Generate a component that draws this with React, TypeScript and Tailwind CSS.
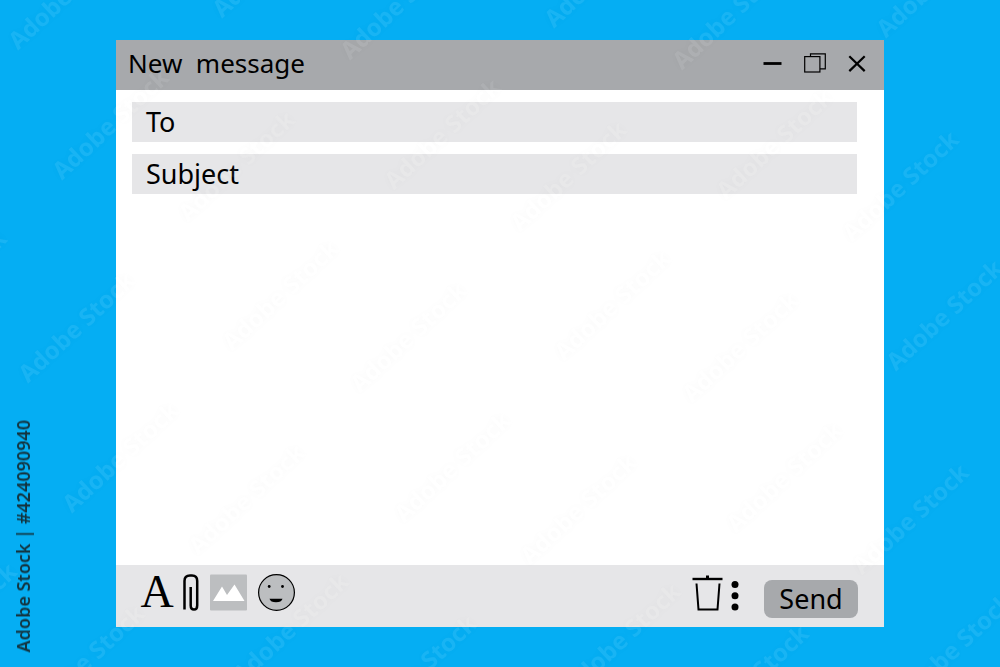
import React from 'react';

// One repeat of the watermark; each point is where a line of text starts
const TILE = [
  [20, 53],
  [64, 183],
  [190, 225],
  [224, 21],
];

const marks = Array.from({ length: 5 * 4 }, (_, n) => {
  const col = (n % 5) - 1;
  const row = Math.floor(n / 5) - 1;
  return TILE.map(([x, y]) => ({
    left: x + col * 332 + row * 10,
    top: y + col * 10 + row * 333,
  }));
}).flat();

const Watermark: React.FC = () => (
  <div
    aria-hidden="true"
    className="pointer-events-none absolute inset-0 overflow-hidden opacity-8 select-none"
  >
    {marks.map((mark) => (
      <span
        key={`${mark.left}-${mark.top}`}
        style={mark}
        className="absolute origin-bottom-left -translate-y-full -rotate-43 text-[24px] leading-none font-bold whitespace-nowrap text-white [text-shadow:0_0_9px_rgba(0,0,0,0.35)]"
      >
        Adobe Stock
      </span>
    ))}
  </div>
);

const TitleBar: React.FC = () => (
  <header className="flex h-[50px] items-center justify-between bg-[#a7a9ac] pr-[17px] pb-1 pl-3">
    <h1 className="text-[26px] leading-8 whitespace-pre">New  message</h1>
    <div className="flex items-center gap-[21px]">
      <button type="button" aria-label="Minimize">
        <svg width="20" height="20" viewBox="0 0 20 20">
          <path d="M.5 10.500h18" stroke="black" strokeWidth="2.800" />
        </svg>
      </button>
      <button type="button" aria-label="Restore">
        <svg width="22" height="20" viewBox="0 0 22 20" fill="none" stroke="black" strokeWidth="1.200">
          <path d="M6.500 3.500V.8h14.800v15h-5.300" />
          <rect x=".7" y="3.600" width="15.200" height="15.400" />
        </svg>
      </button>
      <button type="button" aria-label="Close">
        <svg width="20" height="20" viewBox="0 0 20 20">
          <path d="M2.300 3.300l15.400 14.800M17.700 3.300L2.300 18.100" stroke="black" strokeWidth="2.200" />
        </svg>
      </button>
    </div>
  </header>
);

const Field: React.FC<{ id: string; label: string }> = ({ id, label }) => (
  <div className="flex h-10 items-center gap-3 bg-[#e6e6e8] px-[14px]">
    <label htmlFor={id} className="text-[27px] leading-8">
      {label}
    </label>
    <input
      id={id}
      type="text"
      className="min-w-0 flex-1 bg-transparent text-xl outline-none"
    />
  </div>
);

const Toolbar: React.FC = () => (
  <footer className="flex h-[62px] items-start justify-between bg-[#e6e6e8] px-[26px] pt-[9px]">
    <div className="flex items-start gap-[11px]">
      <button
        type="button"
        aria-label="Formatting"
        className="h-9 w-[30px] font-['Liberation_Serif',serif] text-[46px] leading-9"
      >
        <span className="-mx-1">A</span>
      </button>
      <button type="button" aria-label="Attach file">
        <svg width="16" height="37" viewBox="0 0 16 37" fill="none" stroke="black">
          <path
            d="M1.500 35.500V7Q1.500 1.600 7 1.600H9Q14.200 1.600 14.200 7V31.500Q14.200 35.500 11 35.500Q7.700 35.500 7.700 31.500V13"
            strokeWidth="2.500"
          />
        </svg>
      </button>
      <button type="button" aria-label="Insert image">
        <svg width="37" height="37" viewBox="0 0 37 37">
          <rect y=".6" width="37" height="36" rx="1" fill="#bcbec0" />
          <path d="M3 27L12 12.500L17 21L24.500 10.500L34.500 27Z" fill="white" />
        </svg>
      </button>
      <button type="button" aria-label="Insert emoji">
        <svg width="37" height="37" viewBox="0 0 37 37">
          <circle cx="18.500" cy="18.500" r="17.900" fill="#bcbec0" stroke="black" strokeWidth="1.200" />
          <circle cx="11.200" cy="12.500" r="1.400" />
          <circle cx="24.500" cy="12.500" r="1.400" />
          <path d="M11.500 24.800H24.500Q23.500 28.300 18 28.300Q12.500 28.300 11.500 24.800Z" />
        </svg>
      </button>
    </div>
    <div className="flex items-start">
      <button type="button" aria-label="Discard" className="mr-2">
        <svg width="31" height="37" viewBox="0 0 31 37" fill="none" stroke="black" strokeWidth="2">
          <path d="M.5 5H30.500" strokeWidth="2.400" />
          <path d="M15.500 1.500V5" strokeWidth="3" />
          <path d="M4.500 9.500L6.500 35.500H25.500L27.500 9.500" />
        </svg>
      </button>
      <button type="button" aria-label="More options" className="mr-[25px]">
        <svg width="8" height="37" viewBox="0 0 8 37">
          <circle cx="4" cy="10.500" r="3.500" />
          <circle cx="4" cy="21.700" r="3.500" />
          <circle cx="4" cy="33" r="3.500" />
        </svg>
      </button>
      <button
        type="submit"
        className="mt-[6px] h-[38px] w-[94px] rounded-lg bg-[#a7a9ac] text-[27px] leading-8"
      >
        Send
      </button>
    </div>
  </footer>
);

const App: React.FC = () => {
  return (
    <main className="relative flex min-h-screen bg-[#05aef3] px-[116px] py-10 font-['Noto_Sans',sans-serif] text-black">
      <form
        onSubmit={(e) => e.preventDefault()}
        className="flex min-w-0 flex-1 flex-col bg-white"
      >
        <TitleBar />
        <div className="flex flex-1 flex-col gap-3 pt-3 pr-[27px] pl-4">
          <Field id="to" label="To" />
          <Field id="subject" label="Subject" />
          <textarea
            aria-label="Message"
            className="w-full flex-1 resize-none px-3 text-xl outline-none"
          />
        </div>
        <Toolbar />
      </form>
      <Watermark />
      <p className="absolute bottom-[15px] left-[11px] rotate-180 text-[18px] leading-6 font-semibold text-[#14343f] [writing-mode:vertical-rl]">
        Adobe Stock | #424090940
      </p>
    </main>
  );
};

export default App;
